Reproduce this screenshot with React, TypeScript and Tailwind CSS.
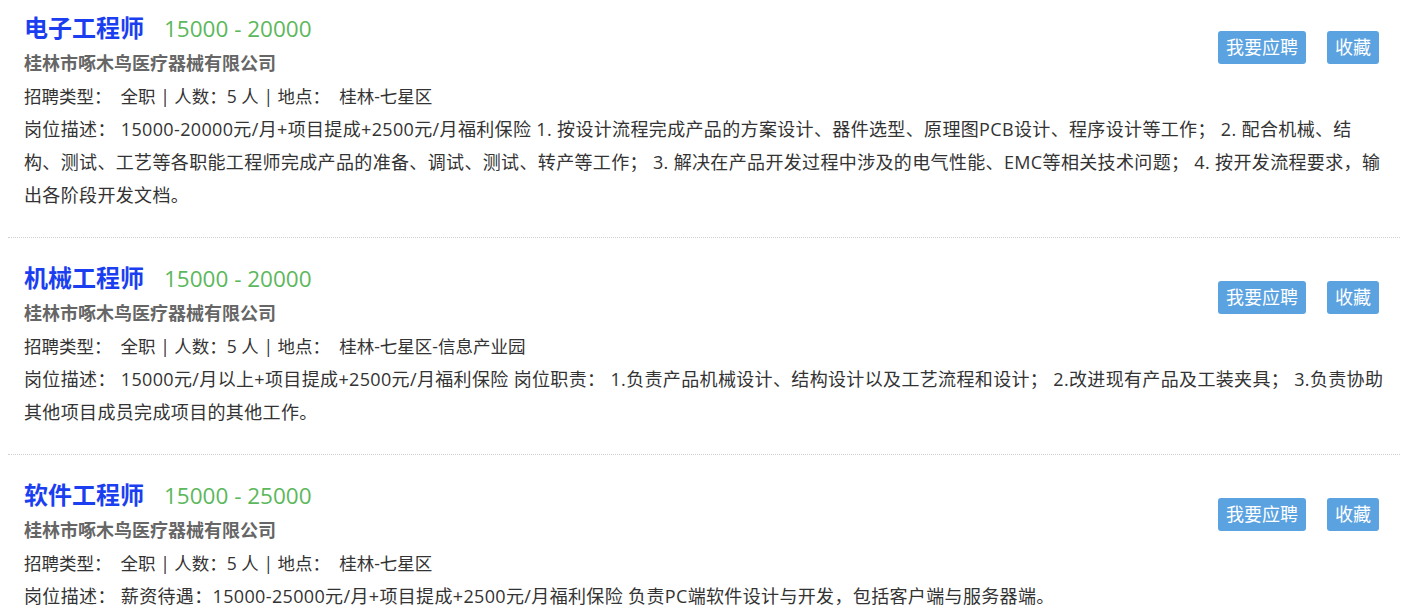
const jobs = [
  {
    title: "电子工程师",
    salary: "15000 - 20000",
    company: "桂林市啄木鸟医疗器械有限公司",
    type: "全职",
    count: "5 人",
    place: "桂林-七星区",
    desc: [
      "15000-20000元/月+项目提成+2500元/月福利保险 1. 按设计流程完成产品的方案设计、器件选型、原理图PCB设计、程序设计等工作； 2. 配合机械、结",
      "构、测试、工艺等各职能工程师完成产品的准备、调试、测试、转产等工作； 3. 解决在产品开发过程中涉及的电气性能、EMC等相关技术问题； 4. 按开发流程要求，输",
      "出各阶段开发文档。",
    ],
  },
  {
    title: "机械工程师",
    salary: "15000 - 20000",
    company: "桂林市啄木鸟医疗器械有限公司",
    type: "全职",
    count: "5 人",
    place: "桂林-七星区-信息产业园",
    desc: [
      "15000元/月以上+项目提成+2500元/月福利保险 岗位职责： 1.负责产品机械设计、结构设计以及工艺流程和设计； 2.改进现有产品及工装夹具； 3.负责协助",
      "其他项目成员完成项目的其他工作。",
    ],
  },
  {
    title: "软件工程师",
    salary: "15000 - 25000",
    company: "桂林市啄木鸟医疗器械有限公司",
    type: "全职",
    count: "5 人",
    place: "桂林-七星区",
    desc: ["薪资待遇：15000-25000元/月+项目提成+2500元/月福利保险 负责PC端软件设计与开发，包括客户端与服务器端。"],
  },
];

export default function App() {
  return (
    <div className="h-[614px] overflow-hidden bg-white font-['Open_Sans','Noto_Sans_CJK_SC',sans-serif] text-[#333]">
      <div className="mx-2">
        {jobs.map((job, index) => (
          <div
            key={index}
            className={`px-4 pb-[25px] border-b border-dotted border-[#cfcfcf] ${
              index === 0 ? "pt-[10px]" : "pt-[22px]"
            }`}
          >
            <div className="flex items-start justify-between">
              <div>
                <div className="flex items-baseline h-[36px] leading-[36px]">
                  <span className="text-[24px] font-bold text-[#1b3ff0]">
                    {job.title}
                  </span>
                  <span className="ml-[20px] text-[22.5px] text-[#5cb85c]">
                    {job.salary}
                  </span>
                </div>
                <div className="h-[34px] leading-[34px] text-[18px] font-bold text-[#666]">
                  {job.company}
                </div>
              </div>
              <div className="flex gap-[21px] mt-[21px] mr-[5px]">
                <button className="h-[33px] px-[8px] rounded-[3px] bg-[#5ba2e0] text-white text-[18px] leading-[33px]">
                  我要应聘
                </button>
                <button className="h-[33px] px-[8px] rounded-[3px] bg-[#5ba2e0] text-white text-[18px] leading-[33px]">
                  收藏
                </button>
              </div>
            </div>
            <div className="text-[17.5px] leading-[33px]">
              招聘类型：&nbsp;&nbsp;{job.type} | 人数：{job.count} | 地点：&nbsp;&nbsp;{job.place}
            </div>
            <div className="text-[18px] leading-[33px] tracking-[0.35px]">
              {job.desc.map((line, i) => (
                <div key={i} className="whitespace-nowrap">
                  {i === 0 ? <>岗位描述：&nbsp;{line}</> : line}
                </div>
              ))}
            </div>
          </div>
        ))}
      </div>
    </div>
  );
}
